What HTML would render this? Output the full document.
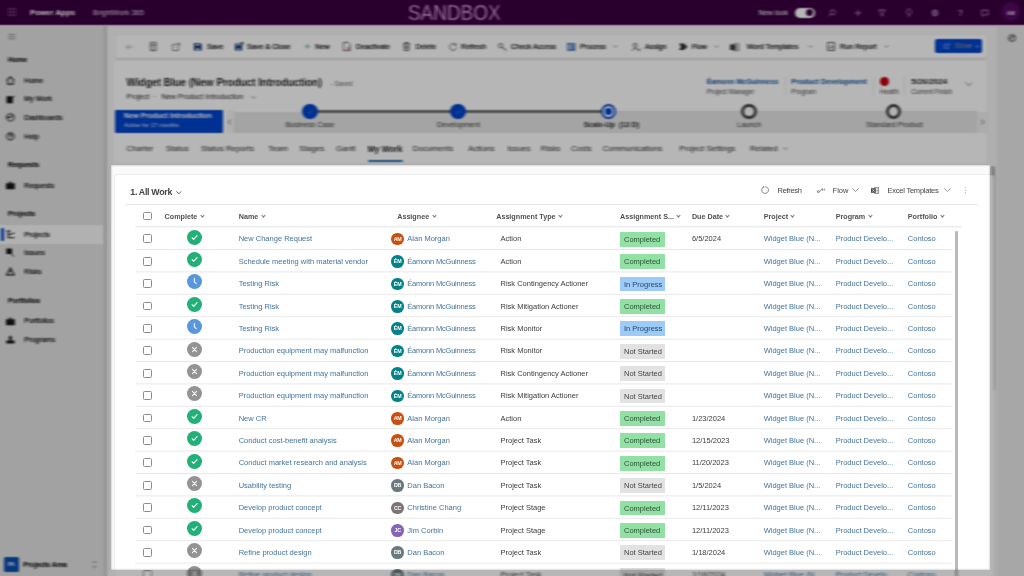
<!DOCTYPE html>
<html lang="en">
<head>
<meta charset="utf-8">
<title>Widget Blue (New Product Introduction) - My Work</title>
<style>
*{box-sizing:border-box;margin:0;padding:0}
html,body{width:1024px;height:576px;overflow:hidden;background:#f6f6f6}
body{font-family:"Liberation Sans",sans-serif;font-size:7.5px;color:#333;position:relative}
a{text-decoration:none;color:#43739a}
#page{position:absolute;left:0;top:0;width:1024px;height:576px;will-change:transform;filter:blur(.35px)}
.abs{position:absolute}
.t{position:absolute;white-space:nowrap;line-height:10px;height:10px;margin-top:-5px}
.b{font-weight:bold}
svg{position:absolute;overflow:visible}

/* top bar */
#top{position:absolute;left:0;top:0;width:1024px;height:25.5px;background:#3a0040;color:#fff}
#sandbox{position:absolute;left:408px;top:1.5px;font-size:22px;line-height:22px;color:#f6c0ff;-webkit-text-stroke:.45px #3a0040;transform-origin:0 50%;transform:scaleX(.86);white-space:nowrap}
/* sidebar */
#side{position:absolute;left:0;top:25.5px;width:106.5px;height:550.5px;background:#e3e3e3;border-right:3.6px solid #cdcdcd}
#side .t{color:#111;font-size:7.1px;-webkit-text-stroke:.22px #111;margin-top:-4.6px}
#side .t.h{font-weight:bold;color:#222;font-size:6.9px}
.ico{position:absolute;width:8.8px;height:8.8px;margin:-4.2px 0 0 -4.4px}
/* command bar */
#cmd{position:absolute;left:115.5px;top:34.5px;width:871.5px;height:23px;background:#fff;border-radius:2px;box-shadow:0 .3px 1.6px rgba(0,0,0,.14)}
#hdr{position:absolute;left:112.5px;top:61px;width:874.5px;height:101.5px;background:#fff;box-shadow:0 .3px 1.6px rgba(0,0,0,.13)}
#rpane{position:absolute;left:997px;top:25.5px;width:27px;height:550.5px;background:#ebebeb}

/* grid card (sharp) */
#gridwrap{position:absolute;left:110.5px;top:165px;width:880px;height:411px;background:#fafafa}
#card{position:absolute;left:114.5px;top:175px;width:879px;height:402px;background:#fff;border-radius:2px;box-shadow:0 0 1.5px rgba(0,0,0,.25)}
.hl{position:absolute;height:.6px;background:#e3e3e3}
.row{position:absolute;left:135.5px;width:817px;height:22.4px}
.row .c{position:absolute;top:7.3px;line-height:10px;white-space:nowrap;font-size:7.5px}
.cb{position:absolute;left:7.5px;top:7.3px;width:8.8px;height:8.8px;border:.7px solid #8c8c8c;border-radius:1.5px;background:#fff}
.st{left:51.7px;top:2.6px;width:15px;height:15px}
.nm{left:103.2px}
.av{position:absolute;left:255.8px;top:5.7px;width:12.6px;height:12.6px;border-radius:50%;color:#fff;font-size:5.3px;font-weight:bold;text-align:center;line-height:12.9px;letter-spacing:-.25px}
.an{left:271.8px}.an.em{letter-spacing:-.2px}
.ty{left:365px;color:#3b3b3b}
.bd{position:absolute;left:484.5px;top:4.8px;width:44.6px;height:14.7px;line-height:16.3px;overflow:hidden;font-size:7.5px;padding-left:4px;white-space:nowrap;color:#2a2a2a}
.bc{background:#92e0a3;color:#2c5238}.bp{background:#9ccbf8;color:#2a4668}.bn{background:#e2e2e2;color:#444}
.du{left:556.4px;color:#3b3b3b}
.pj{left:628.2px}.pg{left:700.2px}.pf{left:772.3px}
.gh{position:absolute;top:216.6px;font-weight:bold;color:#505050;font-size:7.2px;white-space:nowrap;line-height:10px;margin-top:-5px}
.gh i{display:inline-block;width:2.9px;height:2.9px;border-right:.6px solid #777;border-bottom:.6px solid #777;transform:rotate(45deg);margin-left:3.4px;position:relative;top:-1.7px}

/* dim + blur overlays */
.dim{position:absolute;background:rgba(0,0,0,.285);-webkit-backdrop-filter:url(#bl);backdrop-filter:url(#bl);z-index:50}
</style>
</head>
<body>
<svg width="0" height="0" style="position:absolute;left:0;top:0"><filter id="bl" x="0" y="0" width="1" height="1" color-interpolation-filters="sRGB"><feConvolveMatrix order="5 3" kernelMatrix="0.2 0.4 0.4 0.4 0.2 0.5 1 1 1 0.5 0.2 0.4 0.4 0.4 0.2" divisor="7.2" edgeMode="duplicate" preserveAlpha="true"/><feGaussianBlur stdDeviation="0.55 0.45"/></filter></svg>
<div id="page">

<!-- ===== top bar ===== -->
<div id="top">
  <svg style="left:8px;top:8px;width:8px;height:8px" viewBox="0 0 8 8" fill="#c58bd0"><circle cx="1" cy="1" r=".8"/><circle cx="4" cy="1" r=".8"/><circle cx="7" cy="1" r=".8"/><circle cx="1" cy="4" r=".8"/><circle cx="4" cy="4" r=".8"/><circle cx="7" cy="4" r=".8"/><circle cx="1" cy="7" r=".8"/><circle cx="4" cy="7" r=".8"/><circle cx="7" cy="7" r=".8"/></svg>
  <span class="t b" style="left:30px;top:12.6px;font-size:7.85px;color:#fff">Power Apps</span>
  <span class="t" style="left:93px;top:12.6px;font-size:7.4px;color:#e6d3ea">BrightWork 365</span>
  <div id="sandbox">SANDBOX</div>
  <span class="t" style="left:758.5px;top:12.6px;font-size:7.2px;color:#fff">New look</span>
  <div class="abs" style="left:794.5px;top:7.6px;width:20px;height:10px;border-radius:5px;background:#fff"><div class="abs" style="right:1.3px;top:1.5px;width:7px;height:7px;border-radius:50%;background:#3a0040"></div></div>
  <svg style="left:828px;top:8.5px;width:8px;height:8px" viewBox="0 0 8 8" fill="none" stroke="#b88cc4" stroke-width=".9"><circle cx="4.8" cy="3.2" r="2.5"/><path d="M3 5 L.6 7.4"/></svg>
  <svg style="left:853.5px;top:8.5px;width:8px;height:8px" viewBox="0 0 8 8" fill="none" stroke="#b88cc4" stroke-width=".9"><path d="M4 .8V7.2M.8 4H7.2"/></svg>
  <svg style="left:878px;top:8.5px;width:8px;height:8px" viewBox="0 0 8 8" fill="none" stroke="#b88cc4" stroke-width=".9"><path d="M.6 1H7.4L4.8 4.2V7.2L3.2 6.2V4.2Z"/></svg>
  <svg style="left:904.5px;top:8px;width:8px;height:9px" viewBox="0 0 8 9" fill="none" stroke="#b88cc4" stroke-width=".9"><path d="M2.8 6.3C1.2 5 1.2 1 4 1S6.800 5 5.200 6.300ZM3 8H5"/></svg>
  <svg style="left:930.5px;top:8.5px;width:8px;height:8px" viewBox="0 0 8 8" fill="none" stroke="#b88cc4" stroke-width="1.1"><circle cx="4" cy="4" r="2.6"/><circle cx="4" cy="4" r=".6"/></svg>
  <span class="t" style="left:958px;top:12.8px;font-size:8.5px;color:#d9b8e0">?</span>
  <svg style="left:980.5px;top:8.5px;width:8px;height:8px" viewBox="0 0 8 8" fill="none" stroke="#b88cc4" stroke-width=".9"><path d="M.8 1.2H7.2V5.8H3.500L1.800 7.300V5.800H.8Z"/></svg>
  
  <div class="abs" style="left:1001.5px;top:2.3px;width:18.5px;height:18.5px;border-radius:50%;background:#55085f;color:#f3e6f6;font-size:5px;line-height:22.5px;text-align:center;font-weight:bold">AM</div>
</div>

<div class="abs" style="left:0;top:25px;width:1024px;height:1.6px;background:#ffe2ff"></div>
<!-- ===== sidebar ===== -->
<div id="side">
  <svg style="left:7.5px;top:8.2px;width:7.5px;height:5.4px" viewBox="0 0 8 6" stroke="#777" stroke-width=".8"><path d="M0 .5H8M0 3H8M0 5.500H8"/></svg>
  <span class="t h" style="left:8px;top:34.2px">Home</span>
  <svg class="ico" style="left:10.7px;top:54.700px" viewBox="0 0 8 8" fill="none" stroke="#1a1a1a" stroke-width="1"><path d="M.6 4 4 .8 7.400 4M1.500 3.400V7.400H6.500V3.400"/></svg>
  <span class="t" style="left:24.3px;top:54.8px">Home</span>
  <svg class="ico" style="left:10.7px;top:73.200px" viewBox="0 0 8 8" fill="#161616" stroke="none"><path d="M.5 1.200H6.200V7.500H.5ZM1.600 4.300 3 5.800 7.600 .5 8 .9 3 6.900 1.100 4.800Z"/></svg>
  <span class="t" style="left:24.3px;top:73.3px">My Work</span>
  <svg class="ico" style="left:10.7px;top:92px" viewBox="0 0 8 8" fill="none" stroke="#1a1a1a" stroke-width="1"><circle cx="4" cy="4" r="3.300"/><path d="M4 4 6 2.200M4 4H.8"/></svg>
  <span class="t" style="left:24.3px;top:92.2px">Dashboards</span>
  <svg class="ico" style="left:10.7px;top:110.500px" viewBox="0 0 8 8" fill="none" stroke="#1a1a1a" stroke-width="1"><circle cx="4" cy="4" r="3.300"/><path d="M3 3.200C3 1.800 5 1.800 5 3.200 5 4 4 4 4 5M4 6V6.500"/></svg>
  <span class="t" style="left:24.3px;top:110.6px">Help</span>

  <span class="t h" style="left:8px;top:138.7px">Requests</span>
  <svg class="ico" style="left:10.7px;top:160px" viewBox="0 0 8 8" fill="#161616"><path d="M0 2H8V7.500H0ZM2.500 .6H5.500V2H4.800V1.300H3.200V2H2.500Z"/></svg>
  <span class="t" style="left:24.3px;top:160.1px">Requests</span>

  <span class="t h" style="left:8px;top:187.8px">Projects</span>
  <div class="abs" style="left:0;top:199.5px;width:103px;height:18.5px;background:#f9f9f9"></div>
  <div class="abs" style="left:1.4px;top:202.500px;width:2.4px;height:12.500px;background:#0044cc;border-radius:1px"></div>
  <svg class="ico" style="left:10.7px;top:208.700px" viewBox="0 0 8 8" fill="none" stroke="#1a1a1a" stroke-width="1.05"><path d="M.5 1H4M2 1V7H5M2 4H5M5.500 3H7.500M5.500 7H7.500"/></svg>
  <span class="t" style="left:24.3px;top:208.8px">Projects</span>
  <svg class="ico" style="left:10.7px;top:227.100px" viewBox="0 0 8 8" fill="#161616"><path d="M.3 .5H5.500V5.500H.3ZM4.500 5 7.800 7.800 7.200 8 4 5.500Z"/></svg>
  <span class="t" style="left:24.3px;top:227.2px">Issues</span>
  <svg class="ico" style="left:10.7px;top:245.500px" viewBox="0 0 8 8" fill="none" stroke="#1a1a1a" stroke-width="1.05"><path d="M4 .8 7.500 7.200H.5ZM4 3V5"/></svg>
  <span class="t" style="left:24.3px;top:245.6px">Risks</span>

  <span class="t h" style="left:8px;top:274.6px">Portfolios</span>
  <svg class="ico" style="left:10.7px;top:295.300px" viewBox="0 0 8 8" fill="#161616"><path d="M0 2H8V7.500H0ZM2.500 .6H5.500V2H4.800V1.300H3.200V2H2.500Z"/></svg>
  <span class="t" style="left:24.3px;top:295.4px">Portfolios</span>
  <svg class="ico" style="left:10.7px;top:314px" viewBox="0 0 8 8" fill="#161616"><path d="M4 .3 6 3H5V5H7.800V7.800H.2V5H3V3H2Z"/></svg>
  <span class="t" style="left:24.3px;top:314.1px">Programs</span>

  <div class="abs" style="left:4px;top:531.8px;width:14.8px;height:14.8px;border-radius:1.5px;background:#0b4fb3;color:#fff;font-size:5.2px;font-weight:bold;line-height:14.8px;text-align:center">PA</div>
  <span class="t b" style="left:23.3px;top:539.3px;font-size:6.8px !important;color:#222">Projects Area</span>
  <svg style="left:91.5px;top:534px;width:5px;height:9px" viewBox="0 0 5 9" fill="none" stroke="#666" stroke-width=".8"><path d="M.8 3 2.500 1.200 4.200 3M.8 6 2.500 7.800 4.200 6"/></svg>
</div>

<!-- ===== right pane ===== -->
<div id="rpane">
  <svg style="left:10.5px;top:8.5px;width:8px;height:8px" viewBox="0 0 8 8" fill="none" stroke="#444" stroke-width="1.1"><circle cx="4" cy="4" r="3.200"/><path d="M2 5.500C3 3 5 3 6 2.200"/></svg>
</div>
<div class="abs" style="left:991.3px;top:166px;width:3.6px;height:224.5px;background:#aeaeae;border-radius:2px"></div>

<!-- ===== command bar ===== -->
<div id="cmd"></div>

<div id="cmdi" style="color:#111;font-size:7.2px;-webkit-text-stroke:.22px #111">
  <svg style="left:126px;top:43.5px;width:7px;height:6px" viewBox="0 0 8 7" fill="none" stroke="#888" stroke-width=".8"><path d="M7.500 3.500H.8M3.500 .6 .6 3.500 3.500 6.400"/></svg>
  
  <svg style="left:149.500px;top:42px;width:6.500px;height:9px" viewBox="0 0 6.500 9" fill="none" stroke="#444" stroke-width=".8"><path d="M.4 .4H6.100V8.600H.4ZM.4 2.800H6.100M3.200 2.800V8.600"/></svg>
  <svg style="left:171.500px;top:42.500px;width:8px;height:8px" viewBox="0 0 8 8" fill="none" stroke="#666" stroke-width=".8"><path d="M4 1.500H.5V7.500H6.500V4M4.500 .5H7.500V3.500M7.500 .5 3.500 4.500"/></svg>
  <svg style="left:194px;top:42.700px;width:7.600px;height:7.600px" viewBox="0 0 8 8" fill="#173a73"><path d="M0 0H6.500L8 1.500V8H0ZM2 .8V2.600H5.500V.8ZM2.500 5.500V7.300H5.500V5.500Z" fill-rule="evenodd"/></svg>
  <span class="t" style="left:207px;top:46.800px;font-size:7.2px">Save</span>
  <svg style="left:234.500px;top:42.200px;width:8.400px;height:8.400px" viewBox="0 0 8.400 8.400" fill="#173a73"><path d="M0 1.500H5.500L7 3V8.400H0ZM1.600 2.300V3.600H4.600V2.300ZM2 6.500V7.800H5V6.500Z" fill-rule="evenodd"/><path d="M5 0 8.400 0 8.400 3.400Z" fill="#444"/></svg>
  <span class="t" style="left:247px;top:46.800px;font-size:7.2px">Save &amp; Close</span>
  <svg style="left:303.600px;top:43.400px;width:6.800px;height:6.800px" viewBox="0 0 7 7" fill="none" stroke="#5aa070" stroke-width=".8"><path d="M3.500 .8V6.200M.8 3.500H6.200"/></svg>
  <span class="t" style="left:315.3px;top:46.800px;font-size:7.2px">New</span>
  <svg style="left:343px;top:42.200px;width:7.500px;height:9px" viewBox="0 0 7.500 9" fill="none" stroke="#444" stroke-width=".8"><path d="M.4 .4H5L7.100 2.500V8.600H.4Z"/><path d="M3.800 5 6.800 8M6.800 5 3.800 8" stroke="#c22"/></svg>
  <span class="t" style="left:356px;top:46.800px;font-size:7.2px">Deactivate</span>
  <svg style="left:403px;top:42.200px;width:7px;height:9px" viewBox="0 0 7 9" fill="none" stroke="#444" stroke-width=".9"><path d="M0 1.800H7M2.300 1.800V.5H4.700V1.800M.9 1.800 1.300 8.500H5.700L6.100 1.800M2.700 3.500V7M4.300 3.500V7"/></svg>
  <span class="t" style="left:415.500px;top:46.800px;font-size:7.2px">Delete</span>
  <svg style="left:448.700px;top:42.700px;width:8px;height:8px" viewBox="0 0 8 8" fill="none" stroke="#444" stroke-width=".8"><path d="M6.800 2A3.400 3.400 0 1 0 7.400 4.500M7 .3V2.300H5"/></svg>
  <span class="t" style="left:461px;top:46.800px;font-size:7.2px">Refresh</span>
  <svg style="left:497.500px;top:42.500px;width:9px;height:8.500px" viewBox="0 0 9 8.500" fill="none" stroke="#444" stroke-width=".9"><circle cx="2.600" cy="2.600" r="2.100"/><path d="M4.200 4.200 8.500 8M6.500 6.300 7.500 5.300"/></svg>
  <span class="t" style="left:511px;top:46.800px;font-size:7.2px">Check Access</span>
  <svg style="left:567px;top:42.700px;width:8.400px;height:7.800px" viewBox="0 0 8.400 7.800"><path d="M0 0H8.400V7.800H0Z" fill="#3d6fb3"/><path d="M1.200 1.300H3.600V6.500H1.200Z" fill="#c9dcf5"/><path d="M4.600 1.300H7.300M4.600 3.200H7.300M4.600 5.100H7.300" stroke="#fff" stroke-width=".7"/></svg>
  <span class="t" style="left:580px;top:46.800px;font-size:7.2px">Process</span>
  <svg style="left:612.500px;top:45.300px;width:5px;height:3px" viewBox="0 0 5 3" fill="none" stroke="#777" stroke-width=".7"><path d="M.3 .3 2.500 2.600 4.700 .3"/></svg>
  <svg style="left:632px;top:42.500px;width:9px;height:8.500px" viewBox="0 0 9 8.500" fill="none" stroke="#444" stroke-width=".9"><circle cx="3.200" cy="2.300" r="1.900"/><path d="M.3 8C.3 4.800 6 4.800 6.200 7M5.500 6.500 7 8 8.800 5.500"/></svg>
  <span class="t" style="left:645px;top:46.800px;font-size:7.2px">Assign</span>
  <svg style="left:678.500px;top:43px;width:8.500px;height:7.500px" viewBox="0 0 8.500 7.500" fill="#333"><path d="M0 .5H5L8.500 3.700 5 7H0L2 3.700Z"/></svg>
  <span class="t" style="left:691.7px;top:46.800px;font-size:7.2px">Flow</span>
  <svg style="left:714.200px;top:45.300px;width:5px;height:3px" viewBox="0 0 5 3" fill="none" stroke="#777" stroke-width=".7"><path d="M.3 .3 2.500 2.600 4.700 .3"/></svg>
  <svg style="left:730px;top:42.500px;width:9px;height:8.500px" viewBox="0 0 9 8.500"><path d="M3.500 .8H9V7.700H3.500Z" fill="none" stroke="#555" stroke-width=".7"/><path d="M0 1.500H5.500V7H0Z" fill="#3a3a3a"/><path d="M5.800 2.800H8M5.800 4.300H8M5.800 5.800H8" stroke="#555" stroke-width=".6"/></svg>
  <span class="t" style="left:746.7px;top:46.800px;font-size:7.2px">Word Templates</span>
  <svg style="left:807.500px;top:45.300px;width:5px;height:3px" viewBox="0 0 5 3" fill="none" stroke="#777" stroke-width=".7"><path d="M.3 .3 2.500 2.600 4.700 .3"/></svg>
  <svg style="left:827.300px;top:42.200px;width:8px;height:9px" viewBox="0 0 8 9" fill="none" stroke="#444" stroke-width=".9"><path d="M.5 .5H7.500V8.500H.5Z"/><path d="M2.200 6.800V4.500M4 6.800V2.500M5.800 6.800V3.800" stroke="#4a7a3a"/></svg>
  <span class="t" style="left:840px;top:46.800px;font-size:7.2px">Run Report</span>
  <svg style="left:884.200px;top:45.300px;width:5px;height:3px" viewBox="0 0 5 3" fill="none" stroke="#777" stroke-width=".7"><path d="M.3 .3 2.500 2.600 4.700 .3"/></svg>
  <div class="abs" style="left:934.5px;top:39.300px;width:47px;height:13.500px;border-radius:2px;background:#0044cc"></div>
  <svg style="left:943.500px;top:43.3px;width:6px;height:5.600px" viewBox="0 0 7 6.500" fill="none" stroke="#a9c4ff" stroke-width=".8"><path d="M3 1.200H.4V6.100H5.500V4M3.200 3.700C3.500 2 4.500 1.500 6.600 1.500M5.200 .2 6.700 1.500 5.200 2.900"/></svg>
  <span class="t" style="left:955px;top:46.300px;color:#d4e0ff;font-size:6.3px">Share</span>
  <svg style="left:974.500px;top:45px;width:4.400px;height:2.800px" viewBox="0 0 5 3" fill="none" stroke="#fff" stroke-width=".7"><path d="M.3 .3 2.500 2.600 4.700 .3"/></svg>
</div>


<!-- ===== header card ===== -->
<div id="hdr"></div>

<span class="t b" style="left:126.600px;top:83px;font-size:10.400px;color:#1f1f1f;letter-spacing:-.04px">Widget Blue (New Product Introduction)</span>
<span class="t" style="left:330.5px;top:84px;font-size:6.4px;color:#666">- Saved</span>
<span class="t" style="left:126.600px;top:97.300px;font-size:7.300px;color:#1c1c1c">Project</span>
<span class="t" style="left:153.5px;top:97px;font-size:7.300px;color:#555">·</span>
<span class="t" style="left:161.500px;top:97.300px;font-size:7.300px;color:#1c1c1c">New Product Introduction</span>
<svg style="left:251px;top:96.300px;width:4.600px;height:2.800px" viewBox="0 0 5 3" fill="none" stroke="#555" stroke-width=".7"><path d="M.3 .3 2.500 2.600 4.700 .3"/></svg>

<a class="t b" style="left:706.700px;top:81.500px;font-size:7.05px;color:#0f4f9e">Éamonn McGuinness</a>
<span class="t" style="left:706.700px;top:92px;font-size:6.500px;color:#444">Project Manager</span>
<div class="abs" style="left:784.500px;top:77px;width:.6px;height:19px;background:#ececec"></div>
<a class="t b" style="left:791.300px;top:81.500px;font-size:7.3px;color:#0f4f9e">Product Development</a>
<span class="t" style="left:791.300px;top:92px;font-size:6.500px;color:#444">Program</span>
<div class="abs" style="left:872.800px;top:77px;width:.6px;height:19px;background:#ececec"></div>
<div class="abs" style="left:879.700px;top:77px;width:9.400px;height:9.400px;border-radius:50%;background:#c4000f"></div>
<span class="t" style="left:880px;top:92px;font-size:6.500px;color:#444">Health</span>
<div class="abs" style="left:904px;top:77px;width:.6px;height:19px;background:#ececec"></div>
<span class="t b" style="left:911.300px;top:81.500px;font-size:8.1px;color:#222">5/26/2024</span>
<span class="t" style="left:911.300px;top:92px;font-size:6.500px;color:#444">Current Finish</span>
<svg style="left:964.500px;top:81.500px;width:7.500px;height:4.200px" viewBox="0 0 7.500 4.200" fill="none" stroke="#666" stroke-width=".8"><path d="M.4 .4 3.750 3.700 7.100 .4"/></svg>

<!-- BPF -->
<div class="abs" style="left:115.300px;top:110.300px;width:108px;height:23px;background:#0044cc;border-radius:1px"></div>
<span class="t b" style="left:124px;top:116.300px;font-size:7.200px;color:#fff">New Product Introduction</span>
<span class="t" style="left:124px;top:125.300px;font-size:6px;color:#dfe8ff">Active for 17 months</span>
<div class="abs" style="left:225.500px;top:110.300px;width:8.500px;height:23px;background:#f6f6f6"></div>
<svg style="left:228.300px;top:118.500px;width:3.200px;height:6px" viewBox="0 0 3.200 6" fill="none" stroke="#555" stroke-width=".8"><path d="M2.800 .4 .5 3 2.800 5.600"/></svg>
<div class="abs" style="left:234px;top:111.500px;width:743.300px;height:21.800px;background:#e6e6e6"></div>
<div class="abs" style="left:977.300px;top:111.500px;width:9.700px;height:21.800px;background:#f1f1f1"></div>
<svg style="left:980.500px;top:119.200px;width:3.200px;height:6px" viewBox="0 0 3.200 6" fill="none" stroke="#555" stroke-width=".8"><path d="M.4 .4 2.700 3 .4 5.600"/></svg>
<div class="abs" style="left:310px;top:109.900px;width:298px;height:3.600px;background:#727272"></div>
<div class="abs" style="left:608px;top:110.800px;width:369px;height:1.400px;background:#e0e0e0"></div>
<div class="abs" style="left:302.3px;top:104px;width:15.4px;height:15.4px;border-radius:50%;background:#0044cc"></div>
<svg style="left:306.500px;top:109px;width:7px;height:5.500px" viewBox="0 0 7 5.500" fill="none" stroke="#3c78d8" stroke-width="1"><path d="M.6 2.800 2.600 4.800 6.400 .7"/></svg>
<div class="abs" style="left:450.3px;top:104px;width:15.4px;height:15.4px;border-radius:50%;background:#0044cc"></div>
<svg style="left:454.500px;top:109px;width:7px;height:5.500px" viewBox="0 0 7 5.500" fill="none" stroke="#3c78d8" stroke-width="1"><path d="M.6 2.800 2.600 4.800 6.400 .7"/></svg>
<div class="abs" style="left:600.8px;top:104px;width:15.4px;height:15.4px;border-radius:50%;background:#fff;border:2.600px solid #0044cc"></div>
<div class="abs" style="left:605.200px;top:108.400px;width:6.600px;height:6.600px;border-radius:50%;background:#0044cc"></div>
<div class="abs" style="left:741.3px;top:104px;width:15.4px;height:15.4px;border-radius:50%;background:#fbfbfb;border:3px solid #444"></div>
<div class="abs" style="left:886.0px;top:104px;width:15.4px;height:15.4px;border-radius:50%;background:#fbfbfb;border:3px solid #444"></div>
<span class="t" style="left:310px;top:125px;font-size:7.300px;color:#333;transform:translateX(-50%)">Business Case</span>
<span class="t" style="left:458.500px;top:125px;font-size:7.300px;color:#333;transform:translateX(-50%)">Development</span>
<span class="t b" style="left:611.500px;top:124.800px;font-size:7.300px;color:#222;transform:translateX(-50%)">Scale-Up&nbsp; (13 D)</span>
<span class="t" style="left:749.300px;top:125px;font-size:7.300px;color:#333;transform:translateX(-50%)">Launch</span>
<span class="t" style="left:894.500px;top:125px;font-size:7.300px;color:#333;transform:translateX(-50%)">Standard Product</span>

<!-- tabs -->
<div id="tabs" style="font-size:8px;color:#262626">
<span class="t" style="left:126.600px;top:148.500px;font-size:inherit">Charter</span>
<span class="t" style="left:166px;top:148.500px;font-size:inherit">Status</span>
<span class="t" style="left:201px;top:148.500px;font-size:inherit">Status Reports</span>
<span class="t" style="left:268.300px;top:148.500px;font-size:inherit">Team</span>
<span class="t" style="left:299.300px;top:148.500px;font-size:inherit">Stages</span>
<span class="t" style="left:336px;top:148.500px;font-size:inherit">Gantt</span>
<span class="t b" style="left:367.700px;top:148.500px;font-size:8.4px;color:#222">My Work</span>
<span class="t" style="left:412.700px;top:148.500px;font-size:inherit">Documents</span>
<span class="t" style="left:468.300px;top:148.500px;font-size:inherit">Actions</span>
<span class="t" style="left:507.300px;top:148.500px;font-size:inherit">Issues</span>
<span class="t" style="left:540.700px;top:148.500px;font-size:inherit">Risks</span>
<span class="t" style="left:571px;top:148.500px;font-size:inherit">Costs</span>
<span class="t" style="left:602.700px;top:148.500px;font-size:inherit">Communications</span>
<span class="t" style="left:679.300px;top:148.500px;font-size:inherit">Project Settings</span>
<span class="t" style="left:750px;top:148.500px;font-size:inherit">Related</span>
<svg style="left:782.500px;top:147.300px;width:5px;height:3px" viewBox="0 0 5 3" fill="none" stroke="#666" stroke-width=".7"><path d="M.3 .3 2.500 2.600 4.700 .3"/></svg>
<div class="abs" style="left:367.700px;top:160px;width:35px;height:1.800px;background:#2f6fb5;border-radius:1px"></div>
</div>


<!-- ===== grid ===== -->
<div id="gridwrap"></div>
<div id="card"></div>
<span class="t" style="left:130.3px;top:191.6px;font-size:8.8px;font-weight:bold;color:#444;letter-spacing:-.3px">1. All Work</span>
<svg style="left:175.5px;top:190.700px;width:5.6px;height:3.4px" viewBox="0 0 5.6 3.4" fill="none" stroke="#555" stroke-width=".95"><path d="M.4 .4 2.800 2.800 5.200 .4"/></svg>

<svg style="left:760.600px;top:186px;width:8px;height:8px" viewBox="0 0 8 8" fill="none" stroke="#555" stroke-width=".7"><path d="M2.300 1.100A3.400 3.400 0 1 0 4.300 .6M2.600 .2 2.200 1.300 3.400 1.700"/></svg>
<span class="t" style="left:777.600px;top:190.700px;color:#444;letter-spacing:-.33px">Refresh</span>
<svg style="left:816.500px;top:187.500px;width:8px;height:5px" viewBox="0 0 8 5" fill="none" stroke="#555" stroke-width=".7"><circle cx="1.300" cy="3.600" r="1"/><path d="M2.300 3.600C4 3.600 3.500 1 5.500 1M5.600 2.600V.6M7.300 2.600V.6"/></svg>
<span class="t" style="left:832.600px;top:190.700px;color:#444">Flow</span>
<svg style="left:852px;top:188.3px;width:7px;height:3.800px" viewBox="0 0 7 3.800" fill="none" stroke="#666" stroke-width=".7"><path d="M.3 .3 3.500 3.400 6.700 .3"/></svg>
<svg style="left:871px;top:186.700px;width:8px;height:7px" viewBox="0 0 8 7"><path d="M3.500 .5H7.600V6.500H3.500Z" fill="none" stroke="#666" stroke-width=".7"/><path d="M5.300 2H7M5.300 3.500H7M5.300 5H7" stroke="#666" stroke-width=".6"/><path d="M0 1.200H4.800V5.800H0Z" fill="#4a4a4a"/><path d="M1.400 2.300 3.400 4.700M3.400 2.300 1.400 4.700" stroke="#fff" stroke-width=".6"/></svg>
<span class="t" style="left:887.500px;top:190.700px;color:#444;letter-spacing:-.23px">Excel Templates</span>
<svg style="left:943.500px;top:188.3px;width:7px;height:3.800px" viewBox="0 0 7 3.800" fill="none" stroke="#666" stroke-width=".7"><path d="M.3 .3 3.500 3.400 6.700 .3"/></svg>
<svg style="left:965.200px;top:187.300px;width:1.200px;height:6.600px" viewBox="0 0 1.200 6.600" fill="#999"><circle cx=".6" cy=".7" r=".55"/><circle cx=".6" cy="3.300" r=".55"/><circle cx=".6" cy="5.900" r=".55"/></svg>


<span class="cb" style="left:143px;top:211.600px"></span>
<span class="gh" style="left:164.6px">Complete<i></i></span>
<span class="gh" style="left:238.7px">Name<i></i></span>
<span class="gh" style="left:397.2px">Assignee<i></i></span>
<span class="gh" style="left:496.2px">Assignment Type<i></i></span>
<span class="gh" style="left:620px">Assignment S...<i></i></span>
<span class="gh" style="left:691.9px">Due Date<i></i></span>
<span class="gh" style="left:763.7px">Project<i></i></span>
<span class="gh" style="left:835.7px">Program<i></i></span>
<span class="gh" style="left:907.8px">Portfolio<i></i></span>
<svg style="left:0;top:0;width:1024px;height:576px" viewBox="0 0 1024 576" stroke="#e2e2e2" stroke-width=".8">
<path d="M125 204.45H978" stroke="#e0e0e0"/>
<path d="M135.5 226.75H961.5" stroke="#dedede"/>
<path d="M135.5 249.50H952.3"/>
<path d="M135.5 271.90H952.3"/>
<path d="M135.5 294.30H952.3"/>
<path d="M135.5 316.70H952.3"/>
<path d="M135.5 339.10H952.3"/>
<path d="M135.5 361.50H952.3"/>
<path d="M135.5 383.90H952.3"/>
<path d="M135.5 406.30H952.3"/>
<path d="M135.5 428.70H952.3"/>
<path d="M135.5 451.10H952.3"/>
<path d="M135.5 473.50H952.3"/>
<path d="M135.5 495.90H952.3"/>
<path d="M135.5 518.30H952.3"/>
<path d="M135.5 540.70H952.3"/>
<path d="M135.5 563.10H952.3"/>
<path d="M135.5 585.50H952.3"/>
</svg>
<div class="row" style="top:227.10px"><span class="cb"></span><svg class="st" viewBox="0 0 14.6 14.6"><circle cx="7.3" cy="7.3" r="7.3" fill="#22b078"/><path d="M4.9 7.5 L6.5 9.1 L9.8 5.5" fill="none" stroke="#fff" stroke-width="1.05" stroke-linecap="round" stroke-linejoin="round"/></svg><a class="c nm">New Change Request</a><span class="av" style="background:#ca5010">AM</span><a class="c an">Alan Morgan</a><span class="c ty">Action</span><span class="bd bc">Completed</span><span class="c du">6/5/2024</span><a class="c pj">Widget Blue (N...</a><a class="c pg">Product Develo...</a><a class="c pf">Contoso</a></div>
<div class="row" style="top:249.50px"><span class="cb"></span><svg class="st" viewBox="0 0 14.6 14.6"><circle cx="7.3" cy="7.3" r="7.3" fill="#22b078"/><path d="M4.9 7.5 L6.5 9.1 L9.8 5.5" fill="none" stroke="#fff" stroke-width="1.05" stroke-linecap="round" stroke-linejoin="round"/></svg><a class="c nm">Schedule meeting with material vendor</a><span class="av" style="background:#038387">ÉM</span><a class="c an em">Éamonn McGuinness</a><span class="c ty">Action</span><span class="bd bc">Completed</span><span class="c du"></span><a class="c pj">Widget Blue (N...</a><a class="c pg">Product Develo...</a><a class="c pf">Contoso</a></div>
<div class="row" style="top:271.90px"><span class="cb"></span><svg class="st" viewBox="0 0 14.6 14.6"><circle cx="7.3" cy="7.3" r="7.3" fill="#5896de"/><path d="M7.2 4.3 L7.2 7.6 L9 9.3" fill="none" stroke="#f4f8ff" stroke-width="1.1" stroke-linecap="round" stroke-linejoin="round"/></svg><a class="c nm">Testing Risk</a><span class="av" style="background:#038387">ÉM</span><a class="c an em">Éamonn McGuinness</a><span class="c ty">Risk Contingency Actioner</span><span class="bd bp">In Progress</span><span class="c du"></span><a class="c pj">Widget Blue (N...</a><a class="c pg">Product Develo...</a><a class="c pf">Contoso</a></div>
<div class="row" style="top:294.30px"><span class="cb"></span><svg class="st" viewBox="0 0 14.6 14.6"><circle cx="7.3" cy="7.3" r="7.3" fill="#22b078"/><path d="M4.9 7.5 L6.5 9.1 L9.8 5.5" fill="none" stroke="#fff" stroke-width="1.05" stroke-linecap="round" stroke-linejoin="round"/></svg><a class="c nm">Testing Risk</a><span class="av" style="background:#038387">ÉM</span><a class="c an em">Éamonn McGuinness</a><span class="c ty">Risk Mitigation Actioner</span><span class="bd bc">Completed</span><span class="c du"></span><a class="c pj">Widget Blue (N...</a><a class="c pg">Product Develo...</a><a class="c pf">Contoso</a></div>
<div class="row" style="top:316.70px"><span class="cb"></span><svg class="st" viewBox="0 0 14.6 14.6"><circle cx="7.3" cy="7.3" r="7.3" fill="#5896de"/><path d="M7.2 4.3 L7.2 7.6 L9 9.3" fill="none" stroke="#f4f8ff" stroke-width="1.1" stroke-linecap="round" stroke-linejoin="round"/></svg><a class="c nm">Testing Risk</a><span class="av" style="background:#038387">ÉM</span><a class="c an em">Éamonn McGuinness</a><span class="c ty">Risk Monitor</span><span class="bd bp">In Progress</span><span class="c du"></span><a class="c pj">Widget Blue (N...</a><a class="c pg">Product Develo...</a><a class="c pf">Contoso</a></div>
<div class="row" style="top:339.10px"><span class="cb"></span><svg class="st" viewBox="0 0 14.6 14.6"><circle cx="7.3" cy="7.3" r="7.3" fill="#939393"/><path d="M5.3 5.3 L9.3 9.3 M9.3 5.3 L5.3 9.3" fill="none" stroke="#f6f6f6" stroke-width="1.05" stroke-linecap="round"/></svg><a class="c nm">Production equipment may malfunction</a><span class="av" style="background:#038387">ÉM</span><a class="c an em">Éamonn McGuinness</a><span class="c ty">Risk Monitor</span><span class="bd bn">Not Started</span><span class="c du"></span><a class="c pj">Widget Blue (N...</a><a class="c pg">Product Develo...</a><a class="c pf">Contoso</a></div>
<div class="row" style="top:361.50px"><span class="cb"></span><svg class="st" viewBox="0 0 14.6 14.6"><circle cx="7.3" cy="7.3" r="7.3" fill="#939393"/><path d="M5.3 5.3 L9.3 9.3 M9.3 5.3 L5.3 9.3" fill="none" stroke="#f6f6f6" stroke-width="1.05" stroke-linecap="round"/></svg><a class="c nm">Production equipment may malfunction</a><span class="av" style="background:#038387">ÉM</span><a class="c an em">Éamonn McGuinness</a><span class="c ty">Risk Contingency Actioner</span><span class="bd bn">Not Started</span><span class="c du"></span><a class="c pj">Widget Blue (N...</a><a class="c pg">Product Develo...</a><a class="c pf">Contoso</a></div>
<div class="row" style="top:383.90px"><span class="cb"></span><svg class="st" viewBox="0 0 14.6 14.6"><circle cx="7.3" cy="7.3" r="7.3" fill="#939393"/><path d="M5.3 5.3 L9.3 9.3 M9.3 5.3 L5.3 9.3" fill="none" stroke="#f6f6f6" stroke-width="1.05" stroke-linecap="round"/></svg><a class="c nm">Production equipment may malfunction</a><span class="av" style="background:#038387">ÉM</span><a class="c an em">Éamonn McGuinness</a><span class="c ty">Risk Mitigation Actioner</span><span class="bd bn">Not Started</span><span class="c du"></span><a class="c pj">Widget Blue (N...</a><a class="c pg">Product Develo...</a><a class="c pf">Contoso</a></div>
<div class="row" style="top:406.30px"><span class="cb"></span><svg class="st" viewBox="0 0 14.6 14.6"><circle cx="7.3" cy="7.3" r="7.3" fill="#22b078"/><path d="M4.9 7.5 L6.5 9.1 L9.8 5.5" fill="none" stroke="#fff" stroke-width="1.05" stroke-linecap="round" stroke-linejoin="round"/></svg><a class="c nm">New CR</a><span class="av" style="background:#ca5010">AM</span><a class="c an">Alan Morgan</a><span class="c ty">Action</span><span class="bd bc">Completed</span><span class="c du">1/23/2024</span><a class="c pj">Widget Blue (N...</a><a class="c pg">Product Develo...</a><a class="c pf">Contoso</a></div>
<div class="row" style="top:428.70px"><span class="cb"></span><svg class="st" viewBox="0 0 14.6 14.6"><circle cx="7.3" cy="7.3" r="7.3" fill="#22b078"/><path d="M4.9 7.5 L6.5 9.1 L9.8 5.5" fill="none" stroke="#fff" stroke-width="1.05" stroke-linecap="round" stroke-linejoin="round"/></svg><a class="c nm">Conduct cost-benefit analysis</a><span class="av" style="background:#ca5010">AM</span><a class="c an">Alan Morgan</a><span class="c ty">Project Task</span><span class="bd bc">Completed</span><span class="c du">12/15/2023</span><a class="c pj">Widget Blue (N...</a><a class="c pg">Product Develo...</a><a class="c pf">Contoso</a></div>
<div class="row" style="top:451.10px"><span class="cb"></span><svg class="st" viewBox="0 0 14.6 14.6"><circle cx="7.3" cy="7.3" r="7.3" fill="#22b078"/><path d="M4.9 7.5 L6.5 9.1 L9.8 5.5" fill="none" stroke="#fff" stroke-width="1.05" stroke-linecap="round" stroke-linejoin="round"/></svg><a class="c nm">Conduct market research and analysis</a><span class="av" style="background:#ca5010">AM</span><a class="c an">Alan Morgan</a><span class="c ty">Project Task</span><span class="bd bc">Completed</span><span class="c du">11/20/2023</span><a class="c pj">Widget Blue (N...</a><a class="c pg">Product Develo...</a><a class="c pf">Contoso</a></div>
<div class="row" style="top:473.50px"><span class="cb"></span><svg class="st" viewBox="0 0 14.6 14.6"><circle cx="7.3" cy="7.3" r="7.3" fill="#939393"/><path d="M5.3 5.3 L9.3 9.3 M9.3 5.3 L5.3 9.3" fill="none" stroke="#f6f6f6" stroke-width="1.05" stroke-linecap="round"/></svg><a class="c nm">Usability testing</a><span class="av" style="background:#69797e">DB</span><a class="c an">Dan Bacon</a><span class="c ty">Project Task</span><span class="bd bn">Not Started</span><span class="c du">1/5/2024</span><a class="c pj">Widget Blue (N...</a><a class="c pg">Product Develo...</a><a class="c pf">Contoso</a></div>
<div class="row" style="top:495.90px"><span class="cb"></span><svg class="st" viewBox="0 0 14.6 14.6"><circle cx="7.3" cy="7.3" r="7.3" fill="#22b078"/><path d="M4.9 7.5 L6.5 9.1 L9.8 5.5" fill="none" stroke="#fff" stroke-width="1.05" stroke-linecap="round" stroke-linejoin="round"/></svg><a class="c nm">Develop product concept</a><span class="av" style="background:#7a7574">CC</span><a class="c an">Christine Chang</a><span class="c ty">Project Stage</span><span class="bd bc">Completed</span><span class="c du">12/11/2023</span><a class="c pj">Widget Blue (N...</a><a class="c pg">Product Develo...</a><a class="c pf">Contoso</a></div>
<div class="row" style="top:518.30px"><span class="cb"></span><svg class="st" viewBox="0 0 14.6 14.6"><circle cx="7.3" cy="7.3" r="7.3" fill="#22b078"/><path d="M4.9 7.5 L6.5 9.1 L9.8 5.5" fill="none" stroke="#fff" stroke-width="1.05" stroke-linecap="round" stroke-linejoin="round"/></svg><a class="c nm">Develop product concept</a><span class="av" style="background:#8764b8">JC</span><a class="c an">Jim Corbin</a><span class="c ty">Project Stage</span><span class="bd bc">Completed</span><span class="c du">12/11/2023</span><a class="c pj">Widget Blue (N...</a><a class="c pg">Product Develo...</a><a class="c pf">Contoso</a></div>
<div class="row" style="top:540.70px"><span class="cb"></span><svg class="st" viewBox="0 0 14.6 14.6"><circle cx="7.3" cy="7.3" r="7.3" fill="#939393"/><path d="M5.3 5.3 L9.3 9.3 M9.3 5.3 L5.3 9.3" fill="none" stroke="#f6f6f6" stroke-width="1.05" stroke-linecap="round"/></svg><a class="c nm">Refine product design</a><span class="av" style="background:#69797e">DB</span><a class="c an">Dan Bacon</a><span class="c ty">Project Task</span><span class="bd bn">Not Started</span><span class="c du">1/18/2024</span><a class="c pj">Widget Blue (N...</a><a class="c pg">Product Develo...</a><a class="c pf">Contoso</a></div>
<div class="row" style="top:563.10px"><span class="cb"></span><svg class="st" viewBox="0 0 14.6 14.6"><circle cx="7.3" cy="7.3" r="7.3" fill="#939393"/><path d="M5.3 5.3 L9.3 9.3 M9.3 5.3 L5.3 9.3" fill="none" stroke="#f6f6f6" stroke-width="1.05" stroke-linecap="round"/></svg><a class="c nm">Refine product design</a><span class="av" style="background:#69797e">DB</span><a class="c an">Dan Bacon</a><span class="c ty">Project Task</span><span class="bd bn">Not Started</span><span class="c du">1/18/2024</span><a class="c pj">Widget Blue (N...</a><a class="c pg">Product Develo...</a><a class="c pf">Contoso</a></div>
<div class="abs" style="left:955.2px;top:231px;width:2.6px;height:345px;background:#b9b9b9;border-radius:1px"></div>

</div>
<!-- ===== dim / blur overlays (everything except the grid region) ===== -->
<div class="dim" style="left:0;top:0;width:1024px;height:165px"></div>
<div class="dim" style="left:0;top:165px;width:111px;height:405px"></div>
<div class="dim" style="left:990px;top:165px;width:34px;height:405px"></div>
<div class="dim" style="left:0;top:570px;width:1024px;height:6px"></div>
<div class="abs" style="left:110.5px;top:165px;width:879.5px;height:405px;box-shadow:inset 0 0 1.6px .2px rgba(0,0,0,.32);z-index:51;pointer-events:none"></div>
</body>
</html>
